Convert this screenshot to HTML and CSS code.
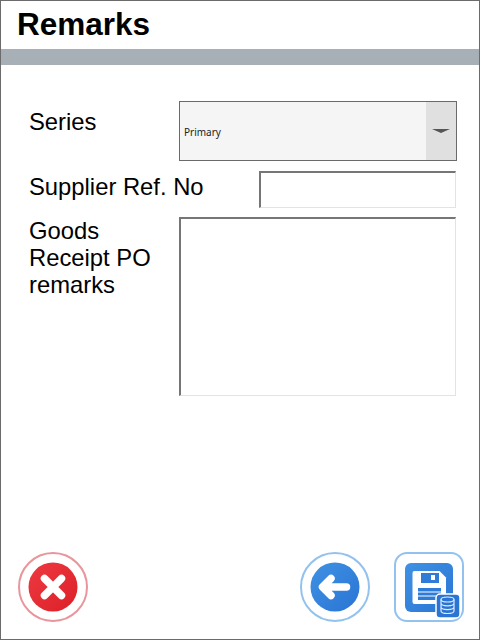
FILE: index.html
```html
<!DOCTYPE html>
<html lang="en">
<head>
	<meta charset="UTF-8">
	<title>Remarks</title>
	<link rel="stylesheet" href="styles.css">
</head>
<body>
	<div class="screen">
		<header class="title">Remarks</header>
		<div class="band"></div>
		<main class="form">
			<div class="row row-series">
				<span class="label">Series</span>
				<div class="select">
					<span class="select-text">Primary</span>
					<span class="select-arrow"><i class="arrow"></i></span>
				</div>
			</div>
			<div class="row row-ref">
				<span class="label">Supplier Ref. No</span>
				<div class="field field-ref"></div>
			</div>
			<div class="row row-remarks">
				<span class="label label-wrap">Goods Receipt PO remarks</span>
				<div class="field field-remarks"></div>
			</div>
		</main>
		<footer class="actions">
			<button class="btn btn-cancel">
				<svg width="70" height="70" viewBox="0 0 70 70">
					<defs>
						<linearGradient id="red" x1="0" y1="0" x2="1" y2="1">
							<stop offset="0" stop-color="#ee3a40"/>
							<stop offset="1" stop-color="#dc1f28"/>
						</linearGradient>
					</defs>
					<circle cx="35" cy="35" r="34" fill="#fff" stroke="#e8959b" stroke-width="2"/>
					<circle cx="35" cy="35" r="24.500" fill="url(#red)"/>
					<path d="M26.500 26.500L43.500 43.500M43.500 26.500L26.500 43.500" stroke="#fff" stroke-width="7.500" stroke-linecap="round"/>
				</svg>
			</button>
			<button class="btn btn-back">
				<svg width="70" height="70" viewBox="0 0 70 70">
					<defs>
						<linearGradient id="blue" x1="0" y1="0" x2="1" y2="1">
							<stop offset="0" stop-color="#3f92e4"/>
							<stop offset="1" stop-color="#2a74d4"/>
						</linearGradient>
					</defs>
					<circle cx="35" cy="35" r="34" fill="#fff" stroke="#93c2ee" stroke-width="2"/>
					<circle cx="35" cy="35" r="24.500" fill="url(#blue)"/>
					<path d="M31 26.500L22.500 35L31 43.500M23 35H46.500" fill="none" stroke="#fff" stroke-width="7.500" stroke-linecap="round" stroke-linejoin="round"/>
				</svg>
			</button>
			<button class="btn btn-save">
				<svg width="70" height="70" viewBox="0 0 70 70">
					<rect x="1" y="1" width="68" height="68" rx="12" fill="#fff" stroke="#93c2ee" stroke-width="2"/>
					<rect x="11" y="11" width="48" height="49" rx="6" fill="url(#blue)"/>
					<path d="M18.500 21a2 2 0 0 1 2-2h25l6.500 6.500V50a2 2 0 0 1-2 2h-29.500a2 2 0 0 1-2-2z" fill="#fff"/>
					<rect x="27" y="21" width="18" height="10" fill="#2f7bd8"/>
					<rect x="37" y="23" width="4" height="5" fill="#fff"/>
					<rect x="24" y="36" width="23" height="12" fill="#2f7bd8"/>
					<path d="M24 40h23M24 44h23" stroke="#fff" stroke-width="1.200"/>
					<rect x="42" y="42" width="24" height="24" rx="4" fill="#2a74d4" stroke="#fff" stroke-width="1.500"/>
					<g fill="none" stroke="#dcebfa" stroke-width="1.200">
						<ellipse cx="53.500" cy="47.500" rx="6.500" ry="2.500"/>
						<path d="M47 47.500v11.500c0 1.400 2.900 2.500 6.500 2.500s6.500-1.100 6.500-2.500V47.500M47 51.300c0 1.400 2.900 2.500 6.500 2.500s6.500-1.100 6.500-2.500M47 55.100c0 1.400 2.900 2.500 6.500 2.500s6.500-1.100 6.500-2.500"/>
					</g>
				</svg>
			</button>
		</footer>
	</div>
</body>
</html>
```
FILE: styles.css
```css
*{
	margin: 0;
	padding: 0;
	box-sizing: border-box;
}

body{
	width: 480px;
	height: 640px;
	overflow: hidden;
	background-color: #fff;
	font-family: "Liberation Sans", Arial, sans-serif;
}

.screen{
	width: 480px;
	height: 640px;
	display: flex;
	flex-direction: column;
	border: 1px solid #6b6b6b;
}

.title{
	height: 48px;
	padding-left: 16px;
	font-size: 31.500px;
	font-weight: 700;
	line-height: 47px;
	color: #000;
}

.band{
	height: 16px;
	background-color: #a6b0b6;
}

.form{
	padding: 36px 23px 0 28px;
	display: flex;
	flex-direction: column;
	gap: 9px;
}

.row{
	display: flex;
	justify-content: space-between;
	font-size: 23.800px;
	line-height: 27px;
	color: #000;
}

.row-series{
	margin-bottom: 1px;
}

.label{
	padding-top: 7px;
}

.row-ref .label{
	padding-top: 2px;
}

.row-remarks .label{
	padding-top: 0;
	width: 140px;
}

.select{
	width: 278px;
	height: 60px;
	margin-right: -1px;
	display: flex;
	background-color: #f5f5f5;
	border: 1px solid #6a6a6a;
}

.select-text{
	flex: 1;
	padding: 23px 0 0 4px;
	font-family: "Noto Sans", sans-serif;
	font-size: 10px;
	line-height: 14px;
	color: #222;
}

.select-arrow{
	width: 30px;
	display: flex;
	align-items: center;
	justify-content: center;
	background-color: #e0e0e0;
}

.arrow{
	width: 0;
	height: 0;
	border-left: 9px solid transparent;
	border-right: 9px solid transparent;
	border-top: 4px solid #555;
}

.field{
	background-color: #fff;
	border-top: 2px solid #767676;
	border-left: 2px solid #767676;
	border-right: 1px solid #e3e3e3;
	border-bottom: 1px solid #e3e3e3;
}

.field-ref{
	width: 197px;
	height: 37px;
}

.field-remarks{
	width: 277px;
	height: 179px;
}

.actions{
	margin-top: auto;
	padding: 0 15px 17px 17px;
	display: flex;
	gap: 24px;
}

.btn{
	width: 70px;
	height: 70px;
	background: none;
	border: none;
	display: block;
}

.btn svg{
	display: block;
}

.btn-cancel{
	margin-right: auto;
}
```
